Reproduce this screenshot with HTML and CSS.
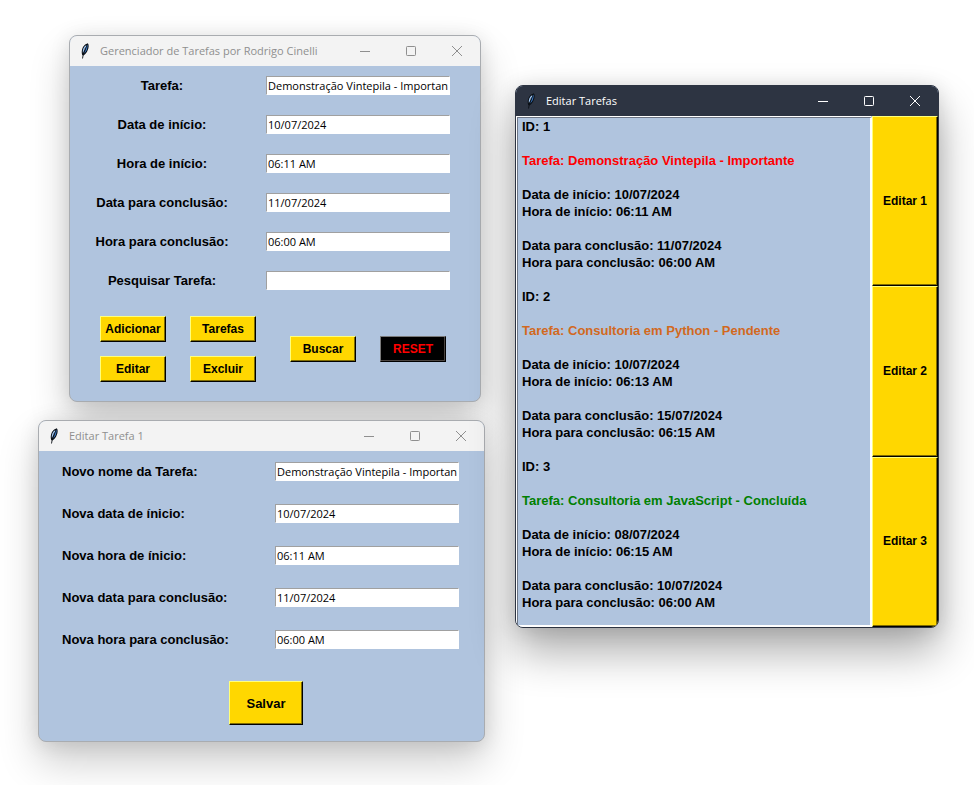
FILE: index.html
```html
<!DOCTYPE html>
<html lang="pt-BR">
<head>
<meta charset="utf-8">
<meta name="viewport" content="width=device-width, initial-scale=1">
<title>Gerenciador de Tarefas</title>
<link rel="stylesheet" href="styles.css">
</head>
<body>
<svg class="defs" aria-hidden="true">
  <symbol id="feather" viewBox="0 0 16 16">
    <path d="M4.200 12C3 8.500 4.300 3.800 7.200 1.600L9.800.2c1.300 1.500 1 4.300 0 6.800-.9 2.400-2.400 4.500-4.400 5.500z" fill="#0b1016"/>
    <path d="M4.900 10.300C4.300 7 5.500 3.600 8.300 1.900c-.3 2.800-1.600 5.700-3.400 8.400z" fill="#a3c8f2"/>
    <path d="M5.900 10.500c1.600-2.500 2.800-5.600 3.300-9 1 2.300-.3 7-3.300 9z" fill="#3a82d8"/>
    <path d="M7.600 4.500C6.800 7.500 5.200 10 4.500 15.500" fill="none" stroke="#0b1016" stroke-width=".9"/>
  </symbol>
  <symbol id="minimize" viewBox="0 0 10 10"><path d="M0 5.500h10" fill="none" stroke="currentColor"/></symbol>
  <symbol id="maximize" viewBox="0 0 10 10"><rect x=".5" y=".5" width="9" height="9" rx=".8" fill="none" stroke="currentColor"/></symbol>
  <symbol id="close" viewBox="0 0 10 10"><path d="M0 0l10 10M10 0L0 10" fill="none" stroke="currentColor"/></symbol>
</svg>
<main class="desktop">
  <section class="window window-manager">
    <header class="titlebar">
      <svg class="feather"><use href="#feather"/></svg>
      <h1 class="title">Gerenciador de Tarefas por Rodrigo Cinelli</h1>
      <button class="control" aria-label="Minimizar"><svg><use href="#minimize"/></svg></button>
      <button class="control" aria-label="Maximizar"><svg><use href="#maximize"/></svg></button>
      <button class="control" aria-label="Fechar"><svg><use href="#close"/></svg></button>
    </header>
    <form class="manager-form">
      <div class="fields">
        <label for="tarefa">Tarefa:</label><input id="tarefa" type="text" value="Demonstração Vintepila - Importante">
        <label for="data-inicio">Data de início:</label><input id="data-inicio" type="text" value="10/07/2024">
        <label for="hora-inicio">Hora de início:</label><input id="hora-inicio" type="text" value="06:11 AM">
        <label for="data-fim">Data para conclusão:</label><input id="data-fim" type="text" value="11/07/2024">
        <label for="hora-fim">Hora para conclusão:</label><input id="hora-fim" type="text" value="06:00 AM">
        <label for="pesquisa">Pesquisar Tarefa:</label><input id="pesquisa" type="text">
      </div>
      <div class="actions">
        <div class="action-grid">
          <button type="button" class="btn">Adicionar</button>
          <button type="button" class="btn">Tarefas</button>
          <button type="button" class="btn">Editar</button>
          <button type="button" class="btn">Excluir</button>
        </div>
        <div class="action-row">
          <button type="button" class="btn">Buscar</button>
          <button type="button" class="btn btn-reset">RESET</button>
        </div>
      </div>
    </form>
  </section>

  <section class="window window-edit">
    <header class="titlebar">
      <svg class="feather"><use href="#feather"/></svg>
      <h2 class="title">Editar Tarefa 1</h2>
      <button class="control" aria-label="Minimizar"><svg><use href="#minimize"/></svg></button>
      <button class="control" aria-label="Maximizar"><svg><use href="#maximize"/></svg></button>
      <button class="control" aria-label="Fechar"><svg><use href="#close"/></svg></button>
    </header>
    <form class="edit-form">
      <div class="fields">
        <label for="novo-nome">Novo nome da Tarefa:</label><input id="novo-nome" type="text" value="Demonstração Vintepila - Importante">
        <label for="nova-data">Nova data de ínicio:</label><input id="nova-data" type="text" value="10/07/2024">
        <label for="nova-hora">Nova hora de ínicio:</label><input id="nova-hora" type="text" value="06:11 AM">
        <label for="nova-data-fim">Nova data para conclusão:</label><input id="nova-data-fim" type="text" value="11/07/2024">
        <label for="nova-hora-fim">Nova hora para conclusão:</label><input id="nova-hora-fim" type="text" value="06:00 AM">
      </div>
      <button type="button" class="btn btn-save">Salvar</button>
    </form>
  </section>

  <section class="window window-list">
    <header class="titlebar">
      <svg class="feather"><use href="#feather"/></svg>
      <h2 class="title">Editar Tarefas</h2>
      <button class="control" aria-label="Minimizar"><svg><use href="#minimize"/></svg></button>
      <button class="control" aria-label="Maximizar"><svg><use href="#maximize"/></svg></button>
      <button class="control" aria-label="Fechar"><svg><use href="#close"/></svg></button>
    </header>
    <div class="list-body">
      <div class="tasks">
        <article class="task">
          <p>ID: 1</p>
          <p class="important">Tarefa: Demonstração Vintepila - Importante</p>
          <p>Data de início: 10/07/2024<br>Hora de início: 06:11 AM</p>
          <p>Data para conclusão: 11/07/2024<br>Hora para conclusão: 06:00 AM</p>
        </article>
        <article class="task">
          <p>ID: 2</p>
          <p class="pending">Tarefa: Consultoria em Python - Pendente</p>
          <p>Data de início: 10/07/2024<br>Hora de início: 06:13 AM</p>
          <p>Data para conclusão: 15/07/2024<br>Hora para conclusão: 06:15 AM</p>
        </article>
        <article class="task">
          <p>ID: 3</p>
          <p class="done">Tarefa: Consultoria em JavaScript - Concluída</p>
          <p>Data de início: 08/07/2024<br>Hora de início: 06:15 AM</p>
          <p>Data para conclusão: 10/07/2024<br>Hora para conclusão: 06:00 AM</p>
        </article>
      </div>
      <div class="edit-buttons">
        <button type="button" class="btn">Editar 1</button>
        <button type="button" class="btn">Editar 2</button>
        <button type="button" class="btn">Editar 3</button>
      </div>
    </div>
  </section>
</main>
</body>
</html>
```
FILE: styles.css
```css
* { box-sizing: border-box; }

body {
  margin: 0;
  background: #fff;
  color: #000;
  font: bold 13px/17px "Liberation Sans", Arial, sans-serif;
}

button, input { margin: 0; font: inherit; }

.defs { display: none; }

.desktop {
  position: relative;
  min-height: 100vh;
  overflow: hidden;
}

/* Windows */
.window {
  position: absolute;
  border: 1px solid #a9acb0;
  border-radius: 8px;
  background: #b0c4de;
  overflow: hidden;
  box-shadow: 0 20px 40px rgba(0, 0, 0, .2), 0 2px 20px rgba(0, 0, 0, .1);
}
.window-manager { left: 69px; top: 35px; width: 412px; }
.window-edit { left: 38px; top: 420px; width: 447px; }
.window-list {
  left: 515px;
  top: 85px;
  width: 424px;
  border-color: #2d3442;
  box-shadow: 0 24px 44px rgba(0, 0, 0, .32), 0 2px 20px rgba(0, 0, 0, .12);
}

.titlebar {
  display: flex;
  align-items: center;
  height: 30px;
  padding-left: 8px;
  background: #f3f3f3;
  color: #8f8f8f;
}
.window-list .titlebar { background: #2d3442; color: #fff; }

.feather { width: 16px; height: 16px; margin-right: 6px; }

.title {
  flex: 1;
  margin: 0;
  font: 11px/16px "Open Sans", sans-serif;
  white-space: nowrap;
}

.control {
  display: flex;
  align-items: center;
  justify-content: center;
  width: 46px;
  height: 30px;
  padding: 0;
  border: 0;
  background: none;
  color: inherit;
}
.control svg { width: 10px; height: 10px; }

/* Fields */
.fields { display: grid; align-items: center; }
.fields input {
  width: 100%;
  height: 19px;
  padding: 0 1px;
  border: 1px solid #fff;
  border-top-color: #a0a0a0;
  border-left-color: #a0a0a0;
  border-radius: 0;
  outline: 0;
  background: #fff;
  color: #000;
  font: 11px/16px "Open Sans", sans-serif;
}

.manager-form { padding: 10px 30px 19px 0; }
.manager-form .fields {
  grid-template-columns: 1fr 184px;
  column-gap: 12px;
  row-gap: 20px;
}
.manager-form label { text-align: center; }

.edit-form { padding: 11px 25px 16px 23px; }
.edit-form .fields {
  grid-template-columns: 1fr 184px;
  row-gap: 23px;
}

/* Buttons */
.btn {
  padding: 0;
  border: 1px solid #ffff7a;
  border-right-color: #000;
  border-bottom-color: #000;
  border-radius: 0;
  background: #ffd700;
  box-shadow: inset -1px -1px #806c00;
  color: #000;
  font-size: 12px;
}
.btn-reset {
  border-top-color: #7a7a7a;
  border-left-color: #7a7a7a;
  background: #000;
  box-shadow: inset -1px -1px #4a4440;
  color: #f00;
}

.actions {
  display: flex;
  align-items: center;
  gap: 34px;
  padding: 26px 0 0 30px;
}
.action-grid {
  display: grid;
  grid-template-columns: 66px 66px;
  gap: 14px 24px;
}
.action-row { display: flex; gap: 24px; }
.actions .btn { width: 66px; height: 26px; }

.btn-save {
  display: block;
  width: 74px;
  height: 44px;
  margin: 32px auto 0 167px;
  font-size: 13px;
}

/* Task list */
.list-body {
  display: grid;
  grid-template-columns: 1fr 66px;
}
.tasks {
  margin: 1px 0 0 1px;
  padding: 0 4px;
  border: 1px solid #6d7584;
  border-right: 2px solid #fff;
  border-bottom: 2px solid #fff;
  box-shadow: -1px -1px #fff;
  overflow: hidden;
}
.task { height: 170px; }
.task:last-child { height: 167px; }
.task p { margin: 0 0 17px; }
.important { color: #f00; }
.pending { color: #d2691e; }
.done { color: #008000; }

.edit-buttons { display: grid; grid-auto-rows: 1fr; }
```
